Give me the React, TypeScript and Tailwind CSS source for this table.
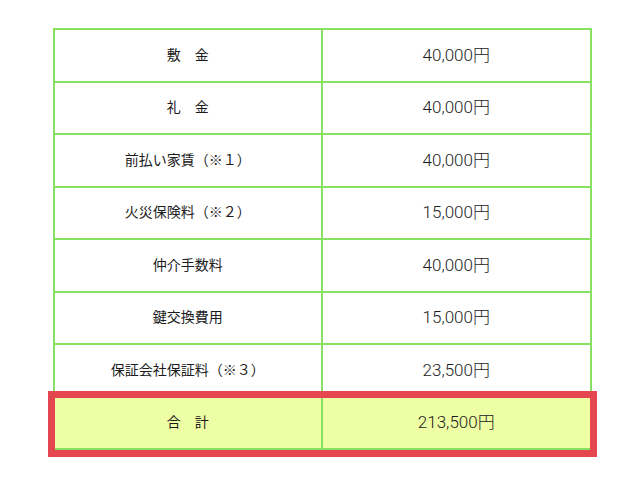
const rows: [string, string][] = [
  ["敷　金", "40,000円"],
  ["礼　金", "40,000円"],
  ["前払い家賃（※１）", "40,000円"],
  ["火災保険料（※２）", "15,000円"],
  ["仲介手数料", "40,000円"],
  ["鍵交換費用", "15,000円"],
  ["保証会社保証料（※３）", "23,500円"],
]

function Row({ label, value, total = false }: { label: string; value: string; total?: boolean }) {
  return (
    <div
      className={
        total
          ? "grid h-[52.5px] grid-cols-2 border-b-2 border-[#88e060] bg-[#eefea5] outline-[7px] outline-solid outline-[#e4474f]"
          : "grid h-[52.5px] grid-cols-2 border-b-2 border-[#88e060]"
      }
    >
      <div className="flex items-center justify-center border-r-2 border-[#88e060] text-[14px]">{label}</div>
      <div className="flex items-center justify-center text-[17px] font-light">{value}</div>
    </div>
  )
}

export default function App() {
  return (
    <div className="min-h-screen bg-white pt-[28px] pl-[53px] text-[#1c1c1c]" style={{ fontFamily: 'Roboto, "Noto Sans CJK JP", sans-serif' }}>
      <div className="w-[539px] border-x-2 border-t-2 border-[#88e060]">
        {rows.map(([label, value]) => (
          <Row key={label} label={label} value={value} />
        ))}
        <Row label="合　計" value="213,500円" total />
      </div>
    </div>
  )
}
